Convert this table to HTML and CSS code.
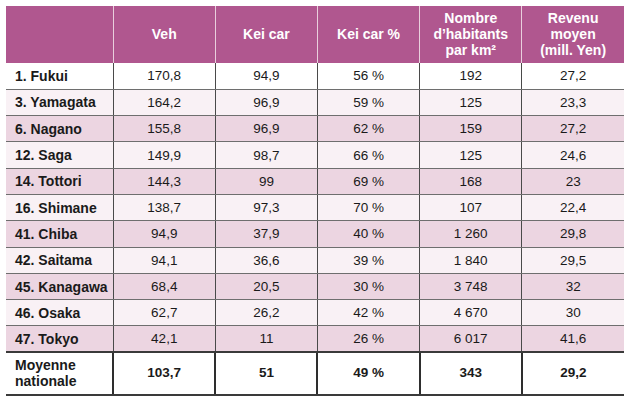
FILE: index.html
```html
<!DOCTYPE html>
<html lang="fr">
<head>
<meta charset="utf-8">
<link rel="stylesheet" href="styles.css">
</head>
<body>
<table class="stats">
  <colgroup>
    <col class="c-name"><col class="c-num"><col class="c-num"><col class="c-num"><col class="c-num"><col class="c-num">
  </colgroup>
  <thead>
    <tr>
      <th></th>
      <th>Veh</th>
      <th>Kei car</th>
      <th>Kei car %</th>
      <th>Nombre<br>d’habitants<br>par km²</th>
      <th>Revenu<br>moyen<br>(mill. Yen)</th>
    </tr>
  </thead>
  <tbody>
    <tr class="r-white"><td>1. Fukui</td><td>170,8</td><td>94,9</td><td>56 %</td><td>192</td><td>27,2</td></tr>
    <tr class="r-light"><td>3. Yamagata</td><td>164,2</td><td>96,9</td><td>59 %</td><td>125</td><td>23,3</td></tr>
    <tr class="r-pink"><td>6. Nagano</td><td>155,8</td><td>96,9</td><td>62 %</td><td>159</td><td>27,2</td></tr>
    <tr class="r-light"><td>12. Saga</td><td>149,9</td><td>98,7</td><td>66 %</td><td>125</td><td>24,6</td></tr>
    <tr class="r-pink"><td>14. Tottori</td><td>144,3</td><td>99</td><td>69 %</td><td>168</td><td>23</td></tr>
    <tr class="r-light"><td>16. Shimane</td><td>138,7</td><td>97,3</td><td>70 %</td><td>107</td><td>22,4</td></tr>
    <tr class="r-pink"><td>41. Chiba</td><td>94,9</td><td>37,9</td><td>40 %</td><td>1 260</td><td>29,8</td></tr>
    <tr class="r-light"><td>42. Saitama</td><td>94,1</td><td>36,6</td><td>39 %</td><td>1 840</td><td>29,5</td></tr>
    <tr class="r-pink"><td>45. Kanagawa</td><td>68,4</td><td>20,5</td><td>30 %</td><td>3 748</td><td>32</td></tr>
    <tr class="r-light"><td>46. Osaka</td><td>62,7</td><td>26,2</td><td>42 %</td><td>4 670</td><td>30</td></tr>
    <tr class="r-pink last"><td>47. Tokyo</td><td>42,1</td><td>11</td><td>26 %</td><td>6 017</td><td>41,6</td></tr>
  </tbody>
  <tfoot>
    <tr class="total"><td>Moyenne<br>nationale</td><td>103,7</td><td>51</td><td>49 %</td><td>343</td><td>29,2</td></tr>
  </tfoot>
</table>
</body>
</html>
```
FILE: styles.css
```css
html, body {
  margin: 0;
  padding: 0;
  background: #ffffff;
}
body {
  padding: 6px 0 0 6px;
  font-family: "Liberation Sans", Arial, sans-serif;
  color: #1a1a1a;
}
.stats {
  border-collapse: collapse;
  table-layout: fixed;
  width: 618px;
  font-size: 13.5px;
}
.c-name { width: 107px; }
.c-num { width: 102px; }

.stats thead th {
  background: #b0578f;
  color: #ffffff;
  font-weight: bold;
  font-size: 14px;
  height: 57px;
  padding: 0 2px 2px;
  line-height: 16px;
  text-align: center;
  vertical-align: middle;
  border-left: 1px solid #e9cfdd;
  box-sizing: border-box;
}
.stats thead th:first-child { border-left: none; }

.stats tbody td {
  height: 26.3px;
  padding: 0;
  text-align: center;
  vertical-align: middle;
  border-left: 1px solid #4a4a4a;
  border-bottom: 1px solid #6e6e6e;
  box-sizing: border-box;
}
.stats tbody td:first-child,
.stats tfoot td:first-child {
  border-left: none;
  text-align: left;
  padding-left: 9px;
  font-weight: bold;
  font-size: 14px;
}
.stats tbody tr.last td { border-bottom: 2px solid #3a3a3a; }

.r-white td { background: #ffffff; }
.r-light td { background: #f9f1f5; }
.r-pink td { background: #ecd5e1; }

.stats tfoot td {
  height: 40px;
  padding: 0 0 1px;
  text-align: center;
  vertical-align: middle;
  font-weight: bold;
  line-height: 16px;
  border-left: 2px solid #2e2e2e;
  border-bottom: 2px solid #3a3a3a;
  background: #ffffff;
}
```
